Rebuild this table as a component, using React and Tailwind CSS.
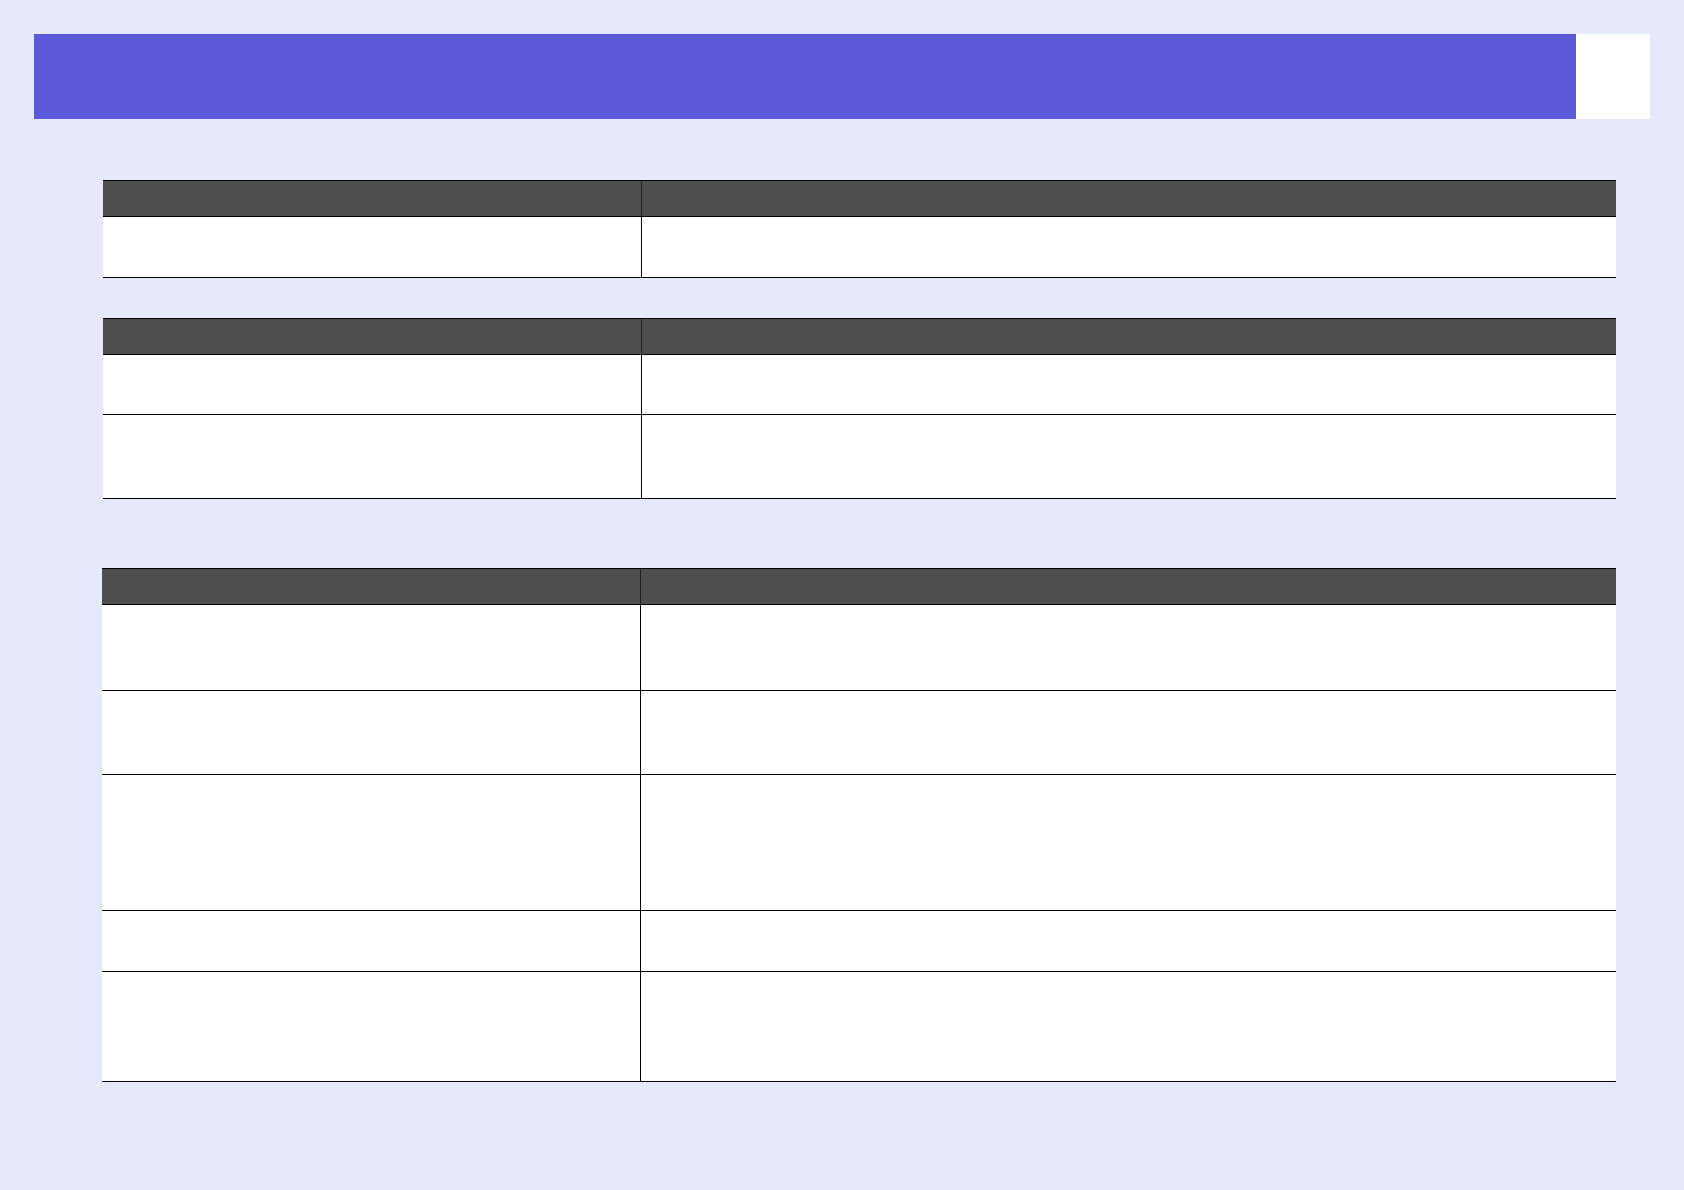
import React from "react";

function Table({ rows, left = "w-[539px]", className = "" }) {
  return (
    <div className={`flex flex-col bg-white ${className}`}>
      <div className="flex h-[37px] bg-[#4f4f4f] border-t border-b border-black">
        <div className={`${left} shrink-0 border-r border-[#222222]`} />
        <div className="flex-1" />
      </div>
      {rows.map((h, i) => (
        <div key={i} className={`flex ${h} border-b border-black`}>
          <div className={`${left} shrink-0 border-r border-black`} />
          <div className="flex-1" />
        </div>
      ))}
    </div>
  );
}

export default function App() {
  return (
    <div className="w-[1684px] h-[1190px] bg-[#e6e8fb] pt-[34px] font-['Liberation_Sans',Arial,sans-serif] overflow-hidden">
      <div className="flex h-[85px] px-[34px]">
        <div className="flex-1 bg-[#5b5bd9]" />
        <div className="w-[74px] bg-white" />
      </div>
      <div className="ml-[103px] w-[1513px] mt-[61px] flex flex-col">
        <Table rows={["h-[61px]"]} />
        <Table className="mt-[40px]" rows={["h-[60px]", "h-[84px]"]} />
        <Table
          className="mt-[69px] -ml-px"
          left="w-[539px]"
          rows={["h-[86px]", "h-[84px]", "h-[136px]", "h-[61px]", "h-[110px]"]}
        />
      </div>
    </div>
  );
}
